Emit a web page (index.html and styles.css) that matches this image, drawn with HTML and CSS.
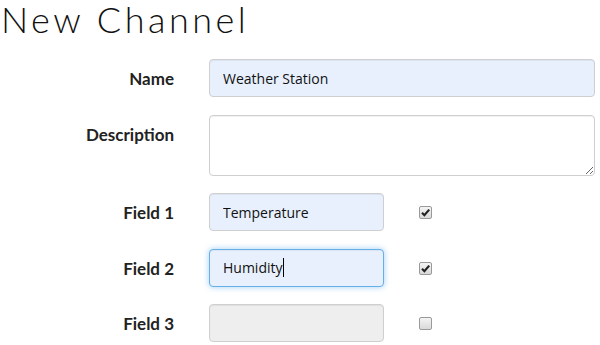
FILE: index.html
```html
<!DOCTYPE html>
<html lang="en">
<head>
    <meta charset="UTF-8">
    <meta name="viewport" content="width=device-width, initial-scale=1.0">
    <title>New Channel</title>
    <link rel="stylesheet" href="styles.css">
</head>
<body>
    <h1>New Channel</h1>

    <form class="channel-form">
        <div class="row">
            <label class="label" for="name">Name</label>
            <input class="input wide filled" id="name" type="text" value="Weather Station">
        </div>

        <div class="row">
            <label class="label" for="desc">Description</label>
            <textarea class="input wide area" id="desc"></textarea>
        </div>

        <div class="row">
            <label class="label" for="f1">Field 1</label>
            <input class="input narrow filled" id="f1" type="text" value="Temperature">
            <span class="check on"><svg viewBox="0 0 13 13" width="13" height="13"><path d="M3 6.8 L5.4 9.2 L10.2 3.6" fill="none" stroke="#222" stroke-width="2.2"/></svg></span>
        </div>

        <div class="row">
            <label class="label">Field 2</label>
            <div class="input narrow filled focus">Humidity<span class="caret"></span></div>
            <span class="check on"><svg viewBox="0 0 13 13" width="13" height="13"><path d="M3 6.8 L5.4 9.2 L10.2 3.6" fill="none" stroke="#222" stroke-width="2.2"/></svg></span>
        </div>

        <div class="row">
            <label class="label" for="f3">Field 3</label>
            <input class="input narrow" id="f3" type="text" disabled>
            <span class="check"></span>
        </div>
    </form>
</body>
</html>
```

FILE: styles.css
```css
body {
    margin: 0;
    font-family: Lato, "Open Sans", sans-serif;
    color: #222;
    background: #fff;
}
h1 {
    margin: 0 0 20px 0;
    padding-left: 1px;
    font-family: Lato, sans-serif;
    font-weight: 300;
    font-size: 36px;
    line-height: 39px;
    letter-spacing: 3.5px;
    color: #111;
}
.channel-form {
    display: flex;
    flex-direction: column;
    gap: 17.5px;
}
.row {
    display: flex;
    align-items: flex-start;
}
.label {
    width: 174px;
    margin-right: 35px;
    padding-top: 10px;
    text-align: right;
    font-weight: 700;
    font-size: 17px;
    line-height: 20px;
    color: #222;
}
.input {
    box-sizing: border-box;
    height: 38px;
    margin: 0;
    padding: 0 13px;
    border: 1px solid #cfcfcf;
    border-radius: 4px;
    background: #fff;
    box-shadow: inset 0 1px 1px rgba(0,0,0,0.06);
    font-family: "Open Sans", sans-serif;
    font-size: 14px;
    color: #111;
    outline: none;
}
.wide {
    width: 386px;
}
.narrow {
    width: 175px;
}
.area {
    height: 61px;
    resize: vertical;
}
.filled {
    background: #e8f0fe;
}
.input:disabled {
    background: #eee;
}
.focus {
    display: flex;
    align-items: center;
    border-color: #66afe9;
    box-shadow: inset 0 1px 1px rgba(0,0,0,0.06), 0 0 6px rgba(102,175,233,0.6);
}
.caret {
    display: inline-block;
    width: 1px;
    height: 19px;
    background: #000;
}
.check {
    box-sizing: border-box;
    width: 13px;
    height: 13px;
    margin: 13px 0 0 35px;
    border: 1px solid #9a9a9a;
    border-radius: 2px;
    background: linear-gradient(#f4f4f4, #d9d9d9);
    display: flex;
}
.check svg {
    margin: -1px;
}
```
